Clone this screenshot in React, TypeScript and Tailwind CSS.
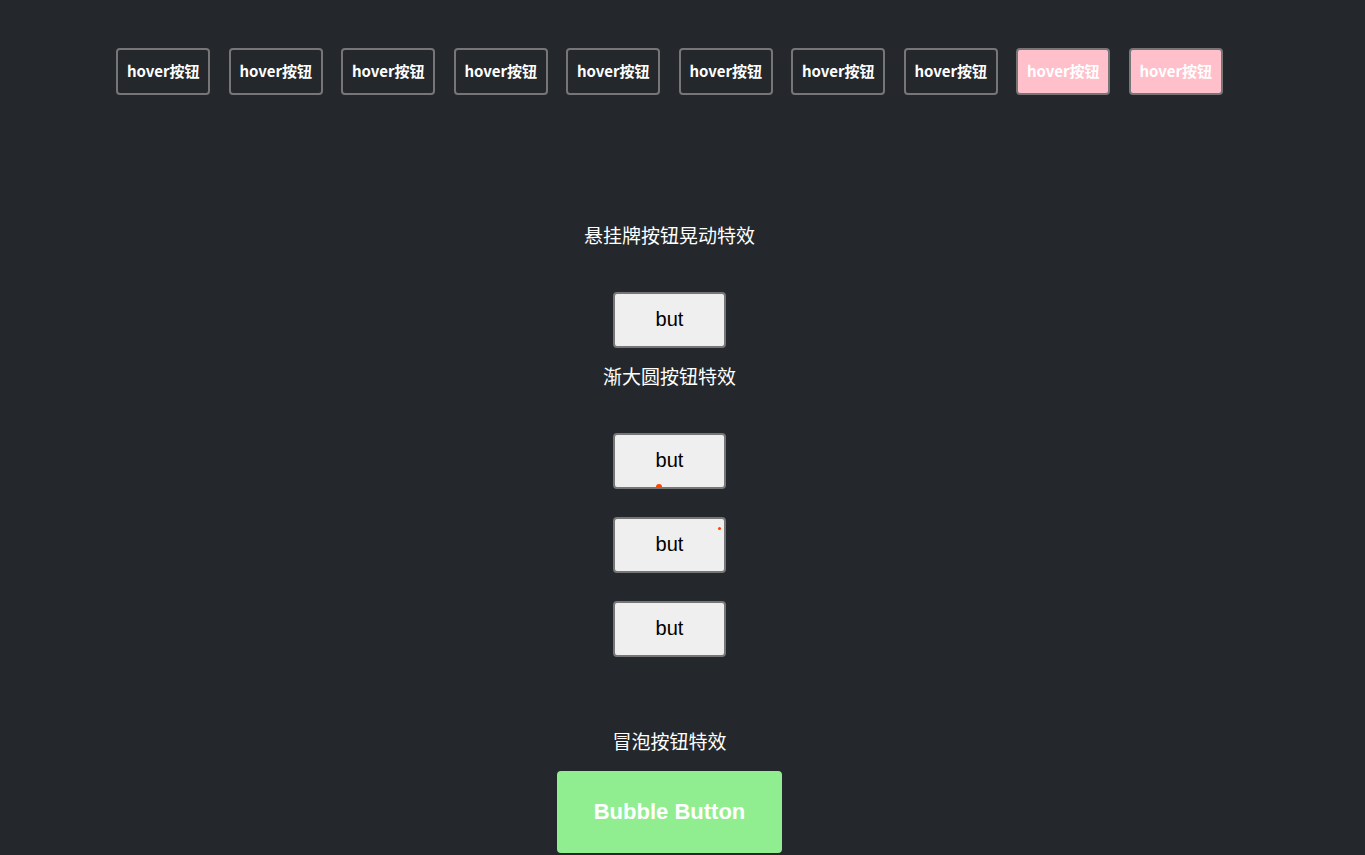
export default function App() {
  const hovers = Array.from({ length: 10 }, (_, i) => i);

  return (
    <div className="min-h-[855px] w-full bg-[#24282c]">
      <div className="flex w-[1339px] flex-col items-center pt-[48px]">
        {/* hover buttons row */}
        <div className="flex gap-[18.5px]">
          {hovers.map((i) => (
            <button
              key={i}
              className={
                i >= 8
                  ? "h-[47px] w-[94px] rounded-[4px] border-2 border-[#767676] bg-[#ffc0cb] text-[15px] font-bold text-white [font-family:'Noto_Sans_CJK_SC',sans-serif]"
                  : "h-[47px] w-[94px] rounded-[4px] border-2 border-[#767676] bg-[#24282c] text-[15px] font-bold text-white [font-family:'Noto_Sans_CJK_SC',sans-serif]"
              }
            >
              hover按钮
            </button>
          ))}
        </div>

        {/* swing sign */}
        <p className="mt-[128px] text-[19px] leading-[24px] text-white [font-family:'Noto_Sans_CJK_SC',sans-serif]">
          悬挂牌按钮晃动特效
        </p>
        <button className="mt-[45px] h-[56px] w-[113px] rounded-[4px] border-2 border-[#767676] bg-[#efefef] pb-[2px] text-[20px] text-black [font-family:'Liberation_Sans',Arial,sans-serif]">
          but
        </button>

        {/* growing circle */}
        <p className="mt-[16px] text-[19px] leading-[24px] text-white [font-family:'Noto_Sans_CJK_SC',sans-serif]">
          渐大圆按钮特效
        </p>
        <button className="relative mt-[45px] h-[56px] w-[113px] overflow-hidden rounded-[4px] border-2 border-[#767676] bg-[#efefef] pb-[2px] text-[20px] text-black [font-family:'Liberation_Sans',Arial,sans-serif]">
          but
          <span className="absolute bottom-[-3px] left-[41px] h-[6px] w-[6px] rounded-full bg-[#ff4500]" />
        </button>
        <button className="relative mt-[28px] h-[56px] w-[113px] overflow-hidden rounded-[4px] border-2 border-[#767676] bg-[#efefef] pb-[2px] text-[20px] text-black [font-family:'Liberation_Sans',Arial,sans-serif]">
          but
          <span className="absolute left-[103px] top-[8px] h-[3px] w-[3px] rounded-full bg-[#ff4500]" />
        </button>
        <button className="mt-[28px] h-[56px] w-[113px] rounded-[4px] border-2 border-[#767676] bg-[#efefef] pb-[2px] text-[20px] text-black [font-family:'Liberation_Sans',Arial,sans-serif]">
          but
        </button>

        {/* bubble */}
        <p className="mt-[72px] text-[19px] leading-[24px] text-white [font-family:'Noto_Sans_CJK_SC',sans-serif]">
          冒泡按钮特效
        </p>
        <button className="mt-[18px] h-[82px] w-[225px] rounded-[4px] bg-[#90ee90] pb-[2px] text-[22px] font-bold text-white [font-family:'Liberation_Sans',Arial,sans-serif]">
          Bubble Button
        </button>
      </div>
    </div>
  );
}
